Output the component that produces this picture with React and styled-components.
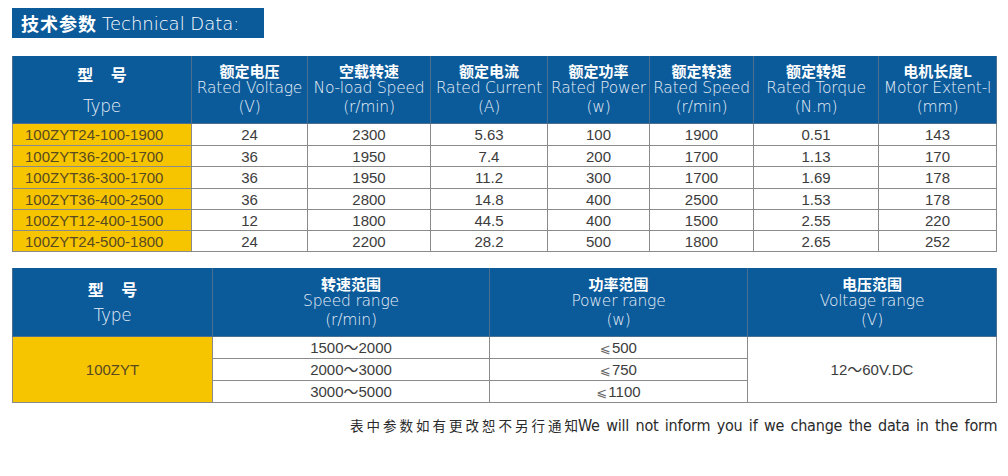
import React from 'react';
import styled, { createGlobalStyle } from 'styled-components';

const GlobalStyle = createGlobalStyle`
  html, body {
    margin: 0;
    padding: 0;
    background: #ffffff;
  }
`;

const Page = styled.div`
  width: 1008px;
  height: 476px;
  box-sizing: border-box;
  padding: 8px 12px 0 12px;
  font-family: "Liberation Sans", Arial, "Noto Sans CJK SC", sans-serif;
  color: #3a3a3a;
  overflow: hidden;
`;

const TitleBar = styled.div`
  display: inline-flex;
  align-items: center;
  height: 30px;
  width: 252px;
  box-sizing: border-box;
  padding-left: 9px;
  background: #0b5a9a;
  color: #ffffff;
`;

const TitleCn = styled.span`
  font-family: "Noto Sans CJK SC", sans-serif;
  font-weight: 700;
  font-size: 18px;
  letter-spacing: 1px;
  margin-right: 5px;
`;

const TitleEn = styled.span`
  font-family: "DejaVu Sans", sans-serif;
  font-weight: 200;
  font-size: 18px;
`;

const Table = styled.table`
  border-collapse: collapse;
  table-layout: fixed;
  width: 984px;
  margin-top: ${p => p.$top}px;
`;

const HeadCell = styled.th`
  background: #0b5a9a;
  color: #ffffff;
  height: ${p => p.$h}px;
  padding: 0;
  border: 1px solid #4d6f8f;
  border-top: none;
  text-align: center;
  vertical-align: middle;
  font-weight: normal;
  line-height: 1;
`;

const HeadCn = styled.div`
  font-family: "Noto Sans CJK SC", sans-serif;
  font-weight: 700;
  font-size: ${p => p.$size || 15}px;
  line-height: ${p => p.$lh || 17}px;
  letter-spacing: ${p => p.$ls || 0}px;
  padding-left: ${p => p.$ls || 0}px;
`;

const HeadEn = styled.div`
  font-family: "DejaVu Sans", sans-serif;
  font-weight: 200;
  font-size: ${p => p.$size || 15.5}px;
  line-height: ${p => p.$lh || 19}px;
  letter-spacing: -0.2px;
  white-space: nowrap;
  color: #e8f0f8;
`;

const TypeGap = styled.div`
  height: ${p => p.$h}px;
`;

const Cell = styled.td`
  height: ${p => p.$h || 20}px;
  padding: 0 ${p => p.$pad || 0}px;
  border: 1px solid #8a8a8a;
  background: ${p => (p.$gold ? '#f6c500' : '#ffffff')};
  color: ${p => (p.$gold ? '#5a4a20' : '#3c3c3c')};
  text-align: ${p => p.$align || 'center'};
  vertical-align: middle;
  font-size: 15px;
  line-height: 1;
  white-space: nowrap;
`;

const LeSign = styled.span`
  font-family: "DejaVu Sans", "Noto Sans CJK SC", sans-serif;
  font-size: 13px;
  color: #666;
  margin-right: 1px;
`;

const Footer = styled.div`
  margin-top: 12px;
  padding-left: 338px;
  display: flex;
  align-items: center;
  white-space: nowrap;
  color: #2a2a2a;
`;

const FooterCn = styled.span`
  font-family: "Noto Sans CJK SC", sans-serif;
  font-size: 13.5px;
  letter-spacing: 3px;
`;

const FooterEn = styled.span`
  font-family: "DejaVu Sans Condensed", "DejaVu Sans", sans-serif;
  font-stretch: condensed;
  font-size: 16px;
  letter-spacing: -0.2px;
  word-spacing: 2px;
  margin-left: -3px;
`;

const widths1 = [179, 116, 123, 117, 102, 104, 125, 118];

const heads1 = [
  ['额定电压', 'Rated Voltage', '(V)'],
  ['空载转速', 'No-load Speed', '(r/min)'],
  ['额定电流', 'Rated Current', '(A)'],
  ['额定功率', 'Rated Power', '(w)'],
  ['额定转速', 'Rated Speed', '(r/min)'],
  ['额定转矩', 'Rated Torque', '(N.m)'],
  ['电机长度L', 'Motor Extent-l', '(mm)'],
];

const rows1 = [
  ['100ZYT24-100-1900', '24', '2300', '5.63', '100', '1900', '0.51', '143'],
  ['100ZYT36-200-1700', '36', '1950', '7.4', '200', '1700', '1.13', '170'],
  ['100ZYT36-300-1700', '36', '1950', '11.2', '300', '1700', '1.69', '178'],
  ['100ZYT36-400-2500', '36', '2800', '14.8', '400', '2500', '1.53', '178'],
  ['100ZYT12-400-1500', '12', '1800', '44.5', '400', '1500', '2.55', '220'],
  ['100ZYT24-500-1800', '24', '2200', '28.2', '500', '1800', '2.65', '252'],
];

const widths2 = [200, 277, 258, 249];

const heads2 = [
  ['转速范围', 'Speed range', '(r/min)'],
  ['功率范围', 'Power range', '(w)'],
  ['电压范围', 'Voltage range', '(V)'],
];

const ranges = [
  ['1500～2000', '500'],
  ['2000～3000', '750'],
  ['3000～5000', '1100'],
];

const rowHeights1 = [21, 20, 21, 20, 20, 20];

const TypeHead = ({ h, gap }) => (
  <HeadCell $h={h}>
    <HeadCn $size={16} $lh={20} $ls={7}>型 号</HeadCn>
    <TypeGap $h={gap} />
    <HeadEn $size={17} $lh={20}>Type</HeadEn>
  </HeadCell>
);

const App = () => {
  return (
    <Page>
      <GlobalStyle />
      <TitleBar>
        <TitleCn>技术参数</TitleCn>
        <TitleEn>Technical Data:</TitleEn>
      </TitleBar>

      <Table $top={18}>
        <colgroup>
          {widths1.map((w, i) => (
            <col key={i} style={{ width: w }} />
          ))}
        </colgroup>
        <thead>
          <tr>
            <TypeHead h={67} gap={12} />
            {heads1.map(([cn, en, unit]) => (
              <HeadCell key={cn} $h={67}>
                <HeadCn>{cn}</HeadCn>
                <HeadEn>{en}</HeadEn>
                <HeadEn>{unit}</HeadEn>
              </HeadCell>
            ))}
          </tr>
        </thead>
        <tbody>
          {rows1.map((row, r) => (
            <tr key={row[0]}>
              {row.map((v, i) => (
                <Cell
                  key={i}
                  $h={rowHeights1[r]}
                  $gold={i === 0}
                  $align={i === 0 ? 'left' : 'center'}
                  $pad={i === 0 ? 12 : 0}
                >
                  {v}
                </Cell>
              ))}
            </tr>
          ))}
        </tbody>
      </Table>

      <Table $top={16}>
        <colgroup>
          {widths2.map((w, i) => (
            <col key={i} style={{ width: w }} />
          ))}
        </colgroup>
        <thead>
          <tr>
            <TypeHead h={68} gap={6} />
            {heads2.map(([cn, en, unit]) => (
              <HeadCell key={cn} $h={68}>
                <HeadCn>{cn}</HeadCn>
                <HeadEn>{en}</HeadEn>
                <HeadEn>{unit}</HeadEn>
              </HeadCell>
            ))}
          </tr>
        </thead>
        <tbody>
          {ranges.map(([speed, power], r) => (
            <tr key={speed}>
              {r === 0 && (
                <Cell rowSpan={3} $gold>
                  100ZYT
                </Cell>
              )}
              <Cell $h={21}>{speed}</Cell>
              <Cell $h={21}>
                <LeSign>⩽</LeSign>
                {power}
              </Cell>
              {r === 0 && <Cell rowSpan={3}>12～60V.DC</Cell>}
            </tr>
          ))}
        </tbody>
      </Table>

      <Footer>
        <FooterCn>表中参数如有更改恕不另行通知</FooterCn>
        <FooterEn>We will not inform you if we change the data in the form</FooterEn>
      </Footer>
    </Page>
  );
};

export default App;
